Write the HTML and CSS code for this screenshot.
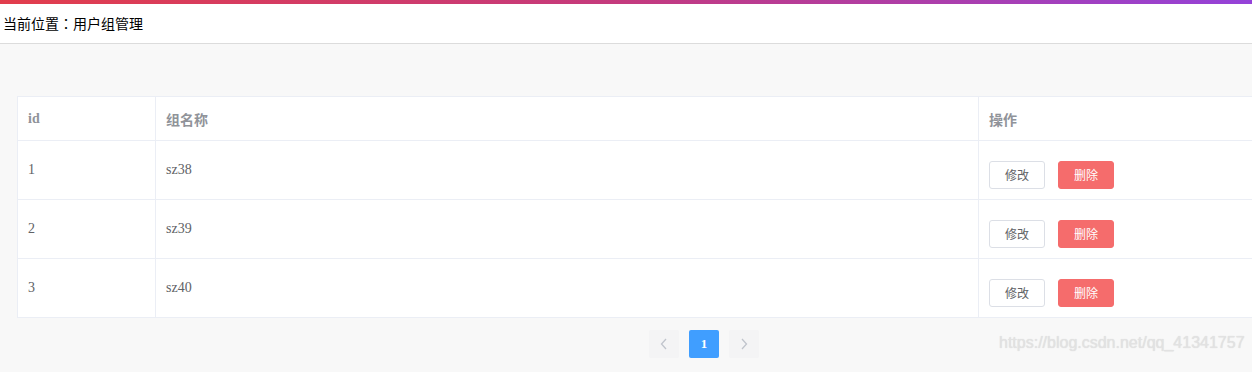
FILE: index.html
```html
<!DOCTYPE html>
<html>
    <head>
        <meta charset="utf-8">
        <link rel="stylesheet" href="styles.css">
    </head>

    <body>
        <div class="topline"></div>

        <div class="crumb">
            当前位置<span class="colon">：</span>用户组管理
        </div>

        <div class="main">
            <div class="wrap">
                <table class="grid">
                    <colgroup>
                        <col class="c1">
                        <col class="c2">
                        <col class="c3">
                    </colgroup>
                    <thead>
                        <tr>
                            <th>id</th>
                            <th>组名称</th>
                            <th>操作</th>
                        </tr>
                    </thead>
                    <tbody>
                        <tr>
                            <td>1</td>
                            <td>sz38</td>
                            <td><div class="ops"><button class="btn edit">修改</button><button class="btn del">删除</button></div></td>
                        </tr>
                        <tr>
                            <td>2</td>
                            <td>sz39</td>
                            <td><div class="ops"><button class="btn edit">修改</button><button class="btn del">删除</button></div></td>
                        </tr>
                        <tr>
                            <td>3</td>
                            <td>sz40</td>
                            <td><div class="ops"><button class="btn edit">修改</button><button class="btn del">删除</button></div></td>
                        </tr>
                    </tbody>
                </table>

                <div class="pager">
                    <span class="page arrow">
                        <svg width="8" height="12" viewBox="0 0 8 12"><path d="M6 1 L1.5 6 L6 11" fill="none" stroke="#c0c4cc" stroke-width="1.3"/></svg>
                    </span>
                    <span class="page active">1</span>
                    <span class="page arrow">
                        <svg width="8" height="12" viewBox="0 0 8 12"><path d="M2 1 L6.5 6 L2 11" fill="none" stroke="#c0c4cc" stroke-width="1.3"/></svg>
                    </span>
                </div>
            </div>
        </div>

        <div class="mark">https://blog.csdn.net/qq_41341757</div>
    </body>
</html>
```

FILE: styles.css
```css
html, body
{
    margin: 0;
    padding: 0;
    height: 100%;
    overflow: hidden;
    background: #f8f8f8;
}

.topline
{
    height: 4px;
    background: linear-gradient(to right, #e23d4c, #c43a7e 50%, #9442d9);
}

.crumb
{
    height: 39px;
    line-height: 38px;
    padding-left: 3px;
    background: white;
    border-bottom: 1px solid #dcdcdc;
    font-family: "Noto Sans CJK SC", sans-serif;
    font-size: 14px;
    color: #000;
}

.colon
{
    font-family: "Noto Sans CJK JP", sans-serif;
}

.main
{
    padding: 52px 0 0 17px;
}

.wrap
{
    width: 1374px;
}

.grid
{
    width: 100%;
    table-layout: fixed;
    border-collapse: collapse;
    background: white;
    font-family: "Liberation Serif", "Noto Sans CJK SC", serif;
    font-size: 14px;
}

.c1
{
    width: 138px;
}

.c2
{
    width: 823px;
}

.grid th, .grid td
{
    border: 1px solid #ebeef5;
    padding: 0 10px;
    text-align: left;
    vertical-align: middle;
}

.grid th
{
    height: 43px;
    color: #909399;
    font-weight: bold;
}

.grid td
{
    height: 58px;
    color: #606266;
}

.ops
{
    display: flex;
    gap: 13px;
    margin-top: 9px;
}

.btn
{
    width: 56px;
    height: 28px;
    padding: 0;
    border-radius: 3px;
    font-family: "Noto Sans CJK SC", sans-serif;
    font-size: 12px;
    cursor: pointer;
}

.edit
{
    background: white;
    border: 1px solid #dcdfe6;
    color: #606266;
}

.del
{
    background: #f56c6c;
    border: 1px solid #f56c6c;
    color: white;
}

.pager
{
    display: flex;
    justify-content: center;
    gap: 10px;
    margin-top: 12px;
}

.page
{
    width: 30px;
    height: 28px;
    display: flex;
    align-items: center;
    justify-content: center;
    border-radius: 2px;
    background: #f4f4f5;
    font-family: "Liberation Serif", serif;
    font-size: 13px;
    font-weight: bold;
}

.active
{
    background: #409eff;
    color: white;
}

.mark
{
    position: absolute;
    left: 999px;
    top: 334px;
    font-family: "Liberation Sans", sans-serif;
    font-size: 16px;
    color: #e2e2e2;
    text-shadow: 0 0 1px #d8d8d8;
}
```
